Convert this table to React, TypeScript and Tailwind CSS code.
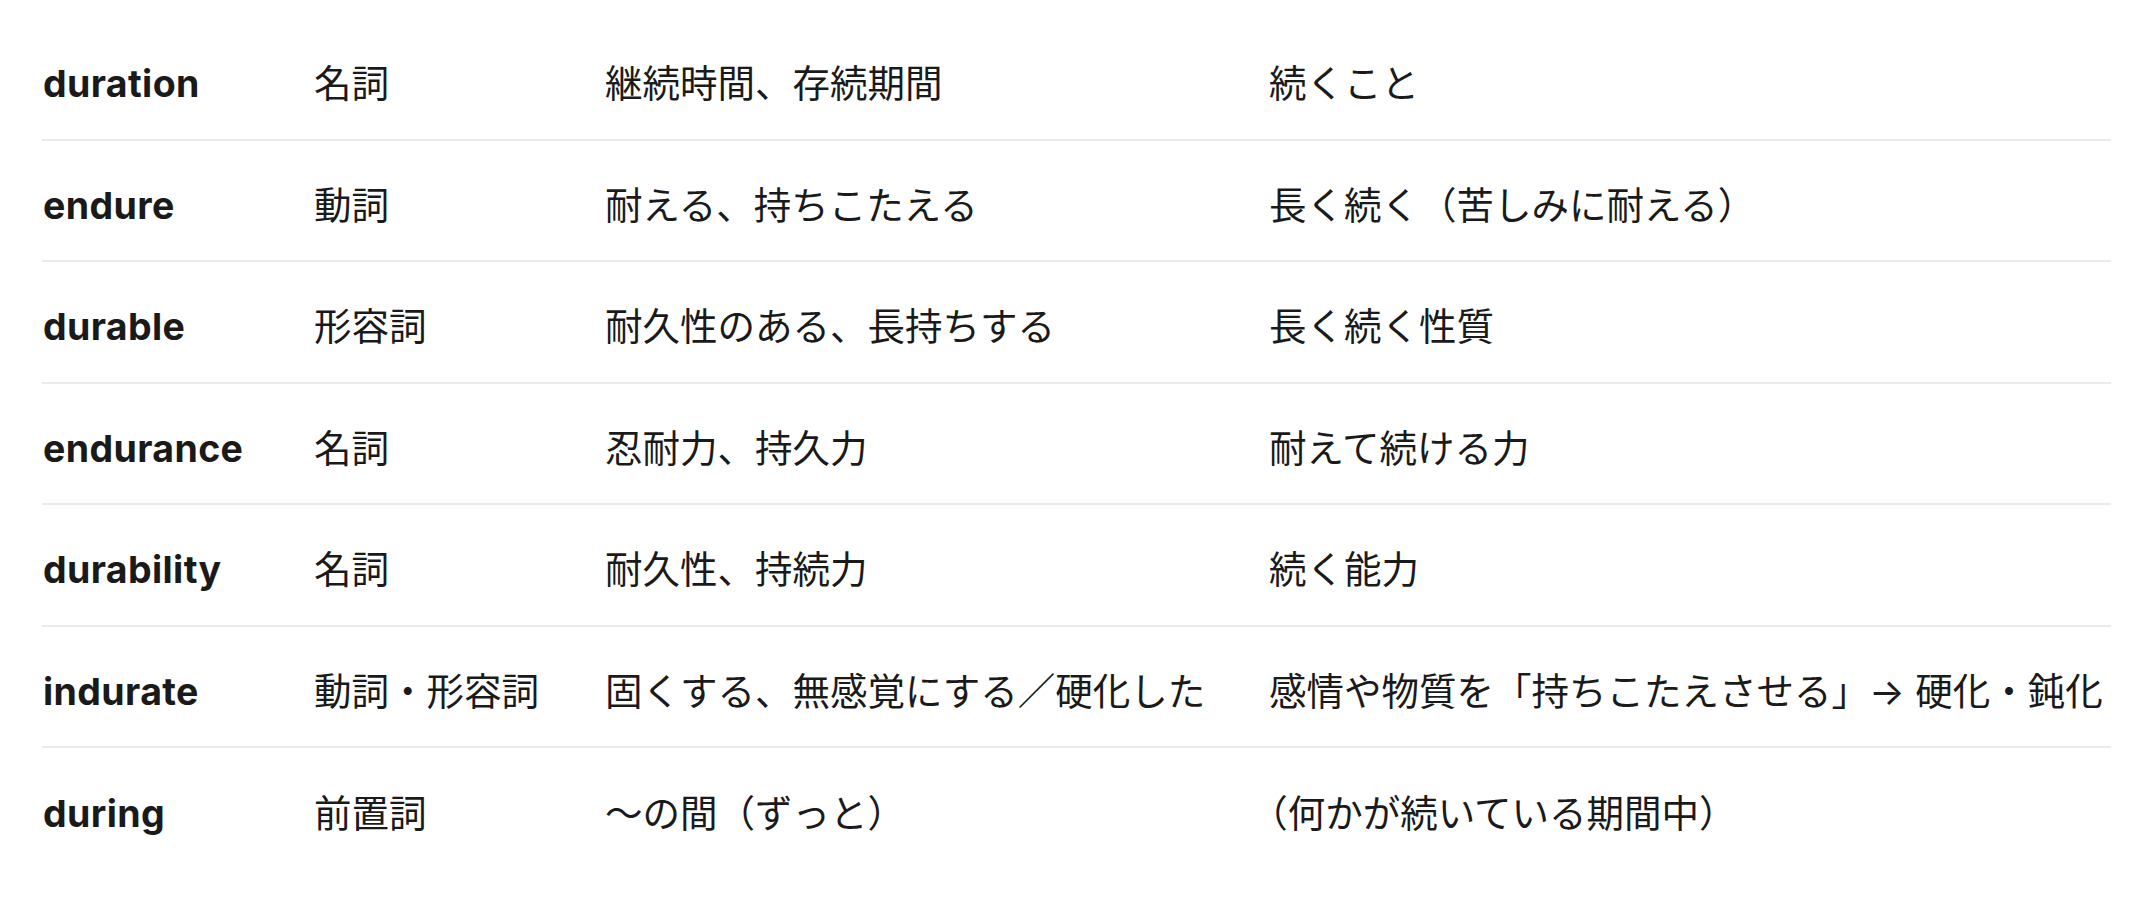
import React from 'react';

interface Entry {
  word: string;
  pos: string;
  meaning: string;
  note: string;
}

const entries: Entry[] = [
  { word: 'duration', pos: '名詞', meaning: '継続時間、存続期間', note: '続くこと' },
  { word: 'endure', pos: '動詞', meaning: '耐える、持ちこたえる', note: '長く続く（苦しみに耐える）' },
  { word: 'durable', pos: '形容詞', meaning: '耐久性のある、長持ちする', note: '長く続く性質' },
  { word: 'endurance', pos: '名詞', meaning: '忍耐力、持久力', note: '耐えて続ける力' },
  { word: 'durability', pos: '名詞', meaning: '耐久性、持続力', note: '続く能力' },
  { word: 'indurate', pos: '動詞・形容詞', meaning: '固くする、無感覚にする／硬化した', note: '感情や物質を「持ちこたえさせる」→ 硬化・鈍化' },
  { word: 'during', pos: '前置詞', meaning: '～の間（ずっと）', note: '（何かが続いている期間中）' },
];

const font = { fontFamily: 'Inter, "Noto Sans CJK JP", sans-serif' };

function WordRow({ entry, last }: { entry: Entry; last: boolean }) {
  return (
    <div
      className={`grid grid-cols-[272px_291px_664px_1fr] items-center h-[121.5px] pt-[11px] text-[37.5px] leading-[56px] text-[#1a1a1a] [text-spacing-trim:trim-start] ${
        last ? '' : 'border-b-2 border-[#ebebeb]'
      }`}
    >
      <div className="font-bold tracking-[0.01em] pl-px">{entry.word}</div>
      <div>{entry.pos}</div>
      <div>{entry.meaning}</div>
      <div>{entry.note}</div>
    </div>
  );
}

export default function App() {
  return (
    <div className="w-[2142px] h-[910px] bg-white overflow-hidden" style={font}>
      <div className="ml-[42px] w-[2069px] pt-[19px]">
        {entries.map((e, i) => (
          <WordRow key={e.word} entry={e} last={i === entries.length - 1} />
        ))}
      </div>
    </div>
  );
}
